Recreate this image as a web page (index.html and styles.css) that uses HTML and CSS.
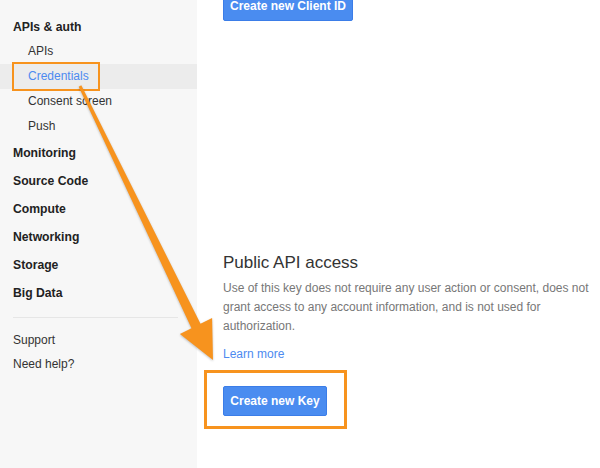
FILE: index.html
```html
<!DOCTYPE html>
<html>
<head>
<meta charset="utf-8">
<link rel="stylesheet" href="styles.css">
</head>
<body>
<div class="page">
  <aside class="sidebar">
    <div class="group-title">APIs &amp; auth</div>
    <ul class="sub">
      <li>APIs</li>
      <li class="active"><span class="mark"></span>Credentials</li>
      <li>Consent screen</li>
      <li>Push</li>
    </ul>
    <ul class="sections">
      <li>Monitoring</li>
      <li>Source Code</li>
      <li>Compute</li>
      <li>Networking</li>
      <li>Storage</li>
      <li>Big Data</li>
    </ul>
    <hr class="sep">
    <ul class="help">
      <li>Support</li>
      <li>Need help?</li>
    </ul>
  </aside>
  <main class="content">
    <button class="btn btn-top">Create new Client ID</button>
    <h2 class="title">Public API access</h2>
    <p class="desc">Use of this key does not require any user action or consent, does not grant access to any account information, and is not used for authorization.</p>
    <a class="link">Learn more</a>
    <div class="highlight">
      <button class="btn btn-key">Create new Key</button>
    </div>
  </main>
  <svg class="arrow" width="600" height="468" viewBox="0 0 600 468">
    <polygon points="81.3,85.3 200.5,323.8 212.1,318 213,360 179.9,334 191.5,328.2 78.7,86.7" fill="#f7931e"/>
  </svg>
</div>
</body>
</html>
```

FILE: styles.css
```css
html, body {
  margin: 0;
  padding: 0;
  background: #fff;
}
body {
  font-family: "Liberation Sans", Arial, sans-serif;
  color: #222;
}
.page {
  position: relative;
  width: 600px;
  height: 468px;
  display: flex;
  overflow: hidden;
}
.sidebar {
  width: 197px;
  flex: none;
  background: #f7f7f7;
  padding-top: 16px;
  box-sizing: border-box;
}
ul {
  list-style: none;
  margin: 0;
  padding: 0;
}
.group-title {
  height: 23px;
  line-height: 22px;
  padding-left: 13px;
  font-weight: bold;
  font-size: 12.2px;
  color: #222;
}
.sub li {
  position: relative;
  height: 25px;
  line-height: 25px;
  padding-left: 28px;
  font-size: 12px;
  color: #333;
}
.sub li.active {
  background: #ececec;
  color: #4d8af0;
}
.mark {
  position: absolute;
  left: 12px;
  top: -2px;
  width: 84px;
  height: 25px;
  border: 2.5px solid #f7931e;
}
.sections li {
  height: 28px;
  line-height: 28px;
  padding-left: 13px;
  font-weight: bold;
  font-size: 12.2px;
  color: #222;
}
.sep {
  margin: 10px 19px 10px 13px;
  border: 0;
  border-top: 1px solid #e6e6e6;
  height: 0;
}
.help li {
  height: 24px;
  line-height: 24px;
  padding-left: 13px;
  font-size: 12px;
  color: #333;
}
.content {
  flex: 1;
  padding-left: 26px;
  padding-right: 0;
}
.btn {
  display: block;
  font-family: "Liberation Sans", Arial, sans-serif;
  font-size: 12px;
  font-weight: bold;
  color: #fff;
  background: #4a8cf0;
  border: 1px solid #3b7de8;
  border-radius: 2px;
  height: 30px;
  padding: 0;
  white-space: nowrap;
  text-align: center;
}
.btn-top {
  margin-top: -9px;
  width: 130px;
}
.btn-key {
  width: 104px;
}
.title {
  margin: 231px 0 0;
  font-size: 17px;
  font-weight: normal;
  color: #333;
  line-height: 22px;
}
.desc {
  margin: 5px 0 0;
  font-size: 12px;
  line-height: 19px;
  color: #777;
}
.link {
  display: block;
  margin-top: 9px;
  font-size: 12px;
  line-height: 19px;
  color: #4d8af0;
}
.highlight {
  display: inline-block;
  margin: 6px 0 0 -19px;
  padding: 13px 17px 10px 16px;
  border: 3px solid #f7931e;
}
.arrow {
  position: absolute;
  left: 0;
  top: 0;
  pointer-events: none;
  filter: drop-shadow(0 1px 1px rgba(0,0,0,0.25));
}
```
